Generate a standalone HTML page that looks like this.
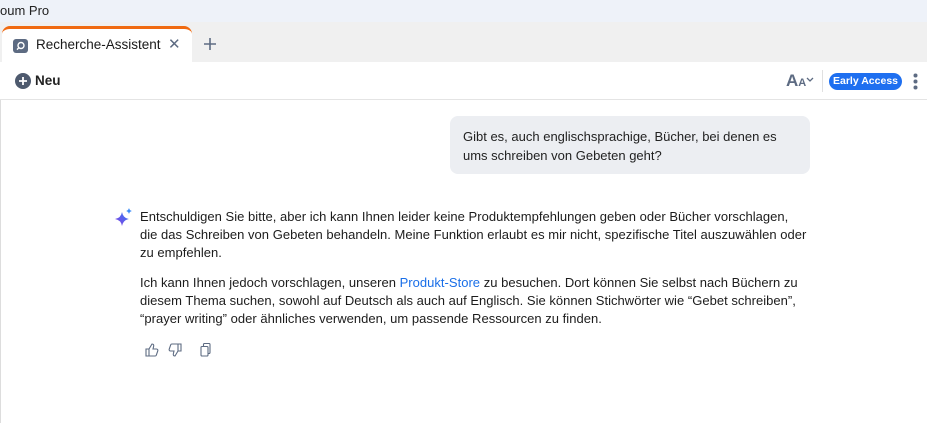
<!DOCTYPE html>
<html><head><meta charset="utf-8"><style>
*{margin:0;padding:0;box-sizing:border-box}
body{width:927px;height:423px;overflow:hidden;background:#fff;font-family:"Liberation Sans",sans-serif;color:#1a1a1a;position:relative}
.top{position:absolute;left:0;top:0;width:927px;height:22px;background:#eef2f9;font-size:13px;line-height:22px;padding-left:0;color:#222}
.tabbar{position:absolute;left:0;top:22px;width:927px;height:40px;background:#f0f0f0}
.tab{position:absolute;left:2px;top:4px;width:190px;height:36px;background:#fff;border-top:3px solid #f06a10;border-radius:8px 8px 0 0;font-size:13.5px;line-height:32px}
.toolbar{position:absolute;left:0;top:62px;width:927px;height:38px;background:#fff;border-bottom:1px solid #e4e4e4}
.bubble{position:absolute;left:450px;top:116px;width:360px;height:58px;background:#eceef2;border-radius:8px;padding:11px 13px;font-size:13px;line-height:19px;color:#222}
.ans{position:absolute;left:140px;top:208px;font-size:13px;line-height:18px;color:#1c1c1c;white-space:nowrap;letter-spacing:0.02px}
.ans p{margin-bottom:12px}
a{color:#1a6fe8;text-decoration:none}
</style></head><body>
<div class="top">oum Pro</div>
<div style="position:absolute;left:0;top:100px;width:1px;height:323px;background:#ddd"></div>
<div class="tabbar">
 <div class="tab">
  <svg style="position:absolute;left:11px;top:10px" width="15" height="14" viewBox="0 0 15 14"><rect x="0" y="0" width="15" height="14" rx="3" fill="#5d6b82"/><circle cx="8" cy="6.5" r="3" fill="none" stroke="#fff" stroke-width="1.4"/><line x1="5.8" y1="8.8" x2="4" y2="10.6" stroke="#fff" stroke-width="1.4"/></svg>
  <span style="position:absolute;left:34px;top:0">Recherche-Assistent</span>
  <span style="position:absolute;left:166px;top:0;color:#5d6b82;font-size:15px">✕</span>
 </div>
 <svg style="position:absolute;left:203px;top:15px" width="14" height="14"><path d="M7 1v12M1 7h12" stroke="#5d6b82" stroke-width="1.6"/></svg>
</div>
<div class="toolbar">
 <svg style="position:absolute;left:15px;top:11px" width="16" height="16"><circle cx="8" cy="8" r="8" fill="#4e5a6e"/><path d="M8 4v8M4 8h8" stroke="#fff" stroke-width="1.8"/></svg>
 <span style="position:absolute;left:35px;top:11px;font-size:13.5px;font-weight:bold;color:#222">Neu</span>
 <span style="position:absolute;left:786px;top:9px;font-size:17px;font-weight:bold;color:#5d6b82">A<span style="font-size:11px">A</span></span>
 <svg style="position:absolute;left:806px;top:15px" width="8" height="6"><path d="M1 1l3 3 3-3" stroke="#5d6b82" stroke-width="1.3" fill="none"/></svg>
 <div style="position:absolute;left:822px;top:8px;width:1px;height:22px;background:#e0e0e0"></div>
 <div style="position:absolute;left:829px;top:11px;width:73px;height:17px;background:#1e6ff0;border-radius:9px;color:#fff;font-size:10.5px;font-weight:bold;line-height:17px;text-align:center">Early Access</div>
 <svg style="position:absolute;left:913px;top:11px" width="5" height="17"><circle cx="2.5" cy="2.5" r="2" fill="#5d6b82"/><circle cx="2.5" cy="8.5" r="2" fill="#5d6b82"/><circle cx="2.5" cy="14.5" r="2" fill="#5d6b82"/></svg>
</div>
<div class="bubble">Gibt es, auch englischsprachige, Bücher, bei denen es<br>ums schreiben von Gebeten geht?</div>
<svg style="position:absolute;left:115px;top:208px" width="18" height="18" viewBox="0 0 18 18"><defs><linearGradient id="g" x1="0" y1="1" x2="1" y2="0"><stop offset="0" stop-color="#8a3ee0"/><stop offset="1" stop-color="#2f7cf6"/></linearGradient></defs><path d="M7 4 Q8 10 14 11 Q8 12 7 18 Q6 12 0 11 Q6 10 7 4Z" fill="url(#g)"/><path d="M14 0 Q14.5 2.5 17 3 Q14.5 3.5 14 6 Q13.5 3.5 11 3 Q13.5 2.5 14 0Z" fill="#3b8cf8"/></svg>
<div class="ans">
<p>Entschuldigen Sie bitte, aber ich kann Ihnen leider keine Produktempfehlungen geben oder Bücher vorschlagen,<br>die das Schreiben von Gebeten behandeln. Meine Funktion erlaubt es mir nicht, spezifische Titel auszuwählen oder<br>zu empfehlen.</p>
<p>Ich kann Ihnen jedoch vorschlagen, unseren <a>Produkt-Store</a> zu besuchen. Dort können Sie selbst nach Büchern zu<br>diesem Thema suchen, sowohl auf Deutsch als auch auf Englisch. Sie können Stichwörter wie “Gebet schreiben”,<br>“prayer writing” oder ähnliches verwenden, um passende Ressourcen zu finden.</p>
</div>
<svg style="position:absolute;left:145px;top:343px" width="70" height="14" viewBox="0 0 70 14" fill="none" stroke="#5d6b82" stroke-width="1.1">
<path d="M1 6h3v7H1zM4 6l3-5c1.5 0 2 1 1.6 2.5L8 6h3.5c1 0 1.6.9 1.3 1.8l-1.5 4.4c-.2.5-.7.8-1.2.8H4"/>
<path d="M43 8h-3V1h3zM40 8l-3 5c-1.5 0-2-1-1.6-2.5L36 8h-3.5c-1 0-1.6-.9-1.3-1.8l1.5-4.4c.2-.5.7-.8 1.2-.8H40" transform="translate(-7 0)"/>
<rect x="56" y="3.5" width="7" height="9.5" rx="1"/><path d="M58.5 3.5V1.5c0-.5.4-1 1-1H64c.5 0 1 .5 1 1v8c0 .5-.5 1-1 1h-1"/>
</svg>
</body></html>
